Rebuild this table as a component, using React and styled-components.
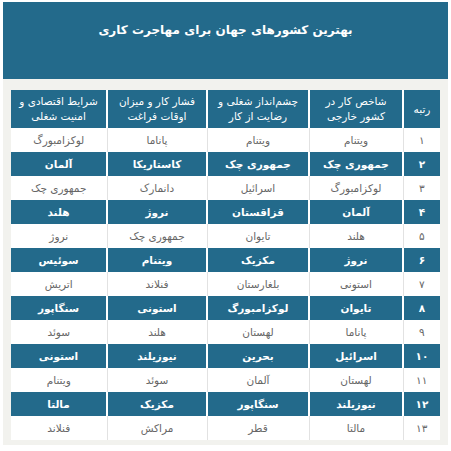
import React from "react";
import styled, { createGlobalStyle } from "styled-components";

const GlobalStyle = createGlobalStyle`
  body {
    margin: 0;
    background: #ffffff;
    font-family: "DejaVu Sans", Tahoma, sans-serif;
  }
`;

const headers = [
  ["رتبه"],
  ["شاخص کار در", "کشور خارجی"],
  ["چشم‌انداز شغلی و", "رضایت از کار"],
  ["فشار کار و میزان", "اوقات فراغت"],
  ["شرایط اقتصادی و", "امنیت شغلی"],
];

const rows = [
  ["۱", "ویتنام", "ویتنام", "پاناما", "لوکزامبورگ"],
  ["۲", "جمهوری چک", "جمهوری چک", "کاستاریکا", "آلمان"],
  ["۳", "لوکزامبورگ", "اسرائیل", "دانمارک", "جمهوری چک"],
  ["۴", "آلمان", "قزاقستان", "نروژ", "هلند"],
  ["۵", "هلند", "تایوان", "جمهوری چک", "نروژ"],
  ["۶", "نروژ", "مکزیک", "ویتنام", "سوئیس"],
  ["۷", "استونی", "بلغارستان", "فنلاند", "اتریش"],
  ["۸", "تایوان", "لوکزامبورگ", "استونی", "سنگاپور"],
  ["۹", "پاناما", "لهستان", "هلند", "سوئد"],
  ["۱۰", "اسرائیل", "بحرین", "نیوزیلند", "استونی"],
  ["۱۱", "لهستان", "آلمان", "سوئد", "ویتنام"],
  ["۱۲", "نیوزیلند", "سنگاپور", "مکزیک", "مالتا"],
  ["۱۳", "مالتا", "قطر", "مراکش", "فنلاند"],
];

const widths = [37, 94, 102, 100, 96];

const Page = styled.div`
  padding: 2px 3px 0 3px;
  direction: rtl;
`;

const TitleBar = styled.header`
  height: 77px;
  background: #236a8b;
  display: flex;
  justify-content: center;
  padding-top: 18px;
  box-sizing: border-box;
`;

const Title = styled.h1`
  margin: 0;
  color: #ffffff;
  font-size: 12px;
  font-weight: bold;
  line-height: 20px;
`;

const Panel = styled.section`
  background: #f2f2ee;
  padding: 11px 8px 5px 8px;
`;

const Table = styled.table`
  width: 429px;
  border-collapse: collapse;
  table-layout: fixed;
  direction: rtl;
`;

const HeadCell = styled.th`
  height: 38px;
  padding: 0 4px;
  background: #236a8b;
  color: #ffffff;
  font-size: 10.5px;
  font-weight: normal;
  line-height: 15px;
  text-align: center;
  border-left: 2px solid #ffffff;
  &:last-child {
    border-left: none;
  }
`;

const Cell = styled.td`
  height: 24px;
  padding: 0 4px;
  box-sizing: border-box;
  text-align: center;
  font-size: 10.5px;
  white-space: nowrap;
  background: ${(p) => (p.$dark ? "#236a8b" : "#ffffff")};
  color: ${(p) => (p.$dark ? "#ffffff" : "#666666")};
  font-weight: ${(p) => (p.$dark ? "bold" : "normal")};
  border-left: ${(p) => (p.$dark ? "2px solid #ffffff" : "1px solid #e2e2e2")};
  &:last-child {
    border-left: none;
  }
`;

const App = () => {
  return (
    <>
      <GlobalStyle />
      <Page>
        <TitleBar>
          <Title>بهترین کشورهای جهان برای مهاجرت کاری</Title>
        </TitleBar>
        <Panel>
          <Table>
            <colgroup>
              {widths.map((w, i) => (
                <col key={i} style={{ width: w }} />
              ))}
            </colgroup>
            <thead>
              <tr>
                {headers.map((h, i) => (
                  <HeadCell key={i}>
                    {h[0]}
                    {h[1] && (
                      <>
                        <br />
                        {h[1]}
                      </>
                    )}
                  </HeadCell>
                ))}
              </tr>
            </thead>
            <tbody>
              {rows.map((r, i) => (
                <tr key={i}>
                  {r.map((c, j) => (
                    <Cell key={j} $dark={i % 2 === 1}>
                      {c}
                    </Cell>
                  ))}
                </tr>
              ))}
            </tbody>
          </Table>
        </Panel>
      </Page>
    </>
  );
};

export default App;
